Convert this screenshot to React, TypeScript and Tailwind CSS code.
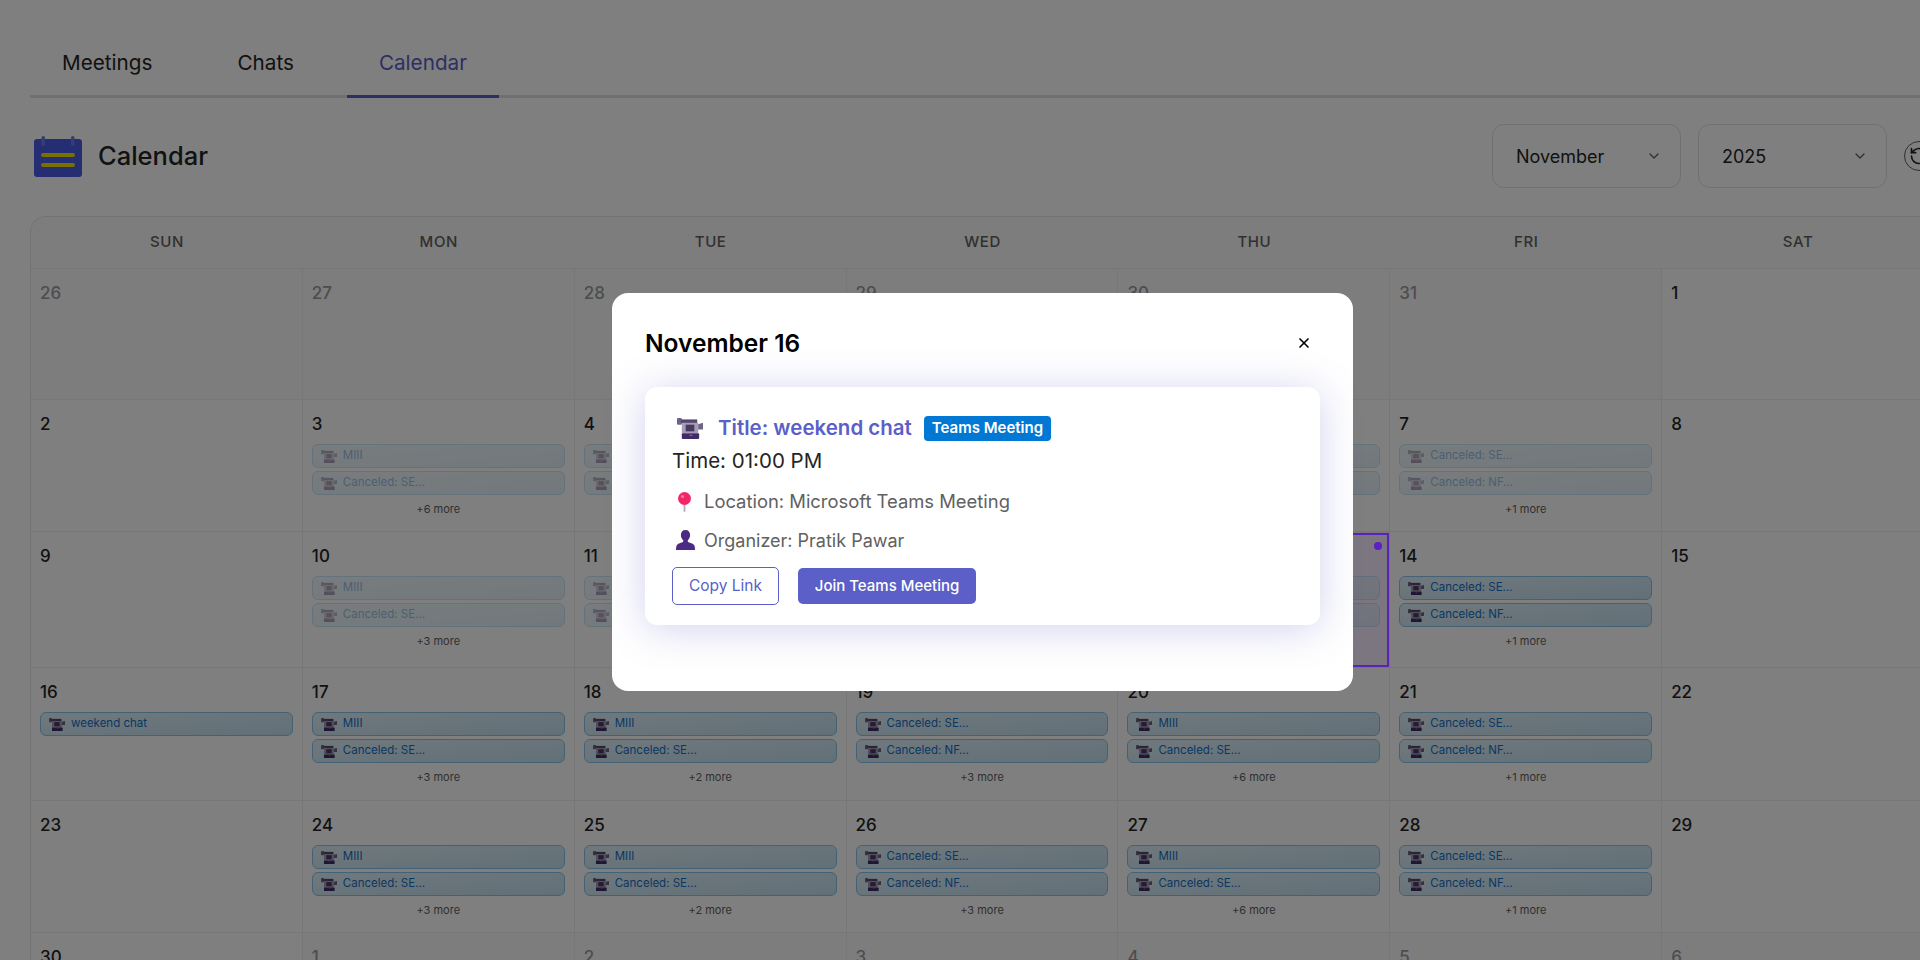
import { ChevronDown, RotateCcw, X } from "lucide-react";

type Day = {
  date: number;
  muted?: boolean;
  faded?: boolean;
  selected?: boolean;
  events?: string[];
  more?: number;
};

const MIII = ["MIII", "Canceled: SE…"];
const CANCELED = ["Canceled: SE…", "Canceled: NF…"];

const weeks: { height: string; days: Day[] }[] = [
  {
    height: "h-[131px]",
    days: [
      { date: 26, muted: true },
      { date: 27, muted: true },
      { date: 28, muted: true },
      { date: 29, muted: true },
      { date: 30, muted: true },
      { date: 31, muted: true },
      { date: 1 },
    ],
  },
  {
    height: "h-[132px]",
    days: [
      { date: 2 },
      { date: 3, faded: true, events: MIII, more: 6 },
      { date: 4, faded: true, events: MIII, more: 2 },
      { date: 5, faded: true, events: CANCELED, more: 3 },
      { date: 6, faded: true, events: MIII, more: 6 },
      { date: 7, faded: true, events: CANCELED, more: 1 },
      { date: 8 },
    ],
  },
  {
    height: "h-[136px]",
    days: [
      { date: 9 },
      { date: 10, faded: true, events: MIII, more: 3 },
      { date: 11, faded: true, events: MIII, more: 2 },
      { date: 12, faded: true, events: CANCELED, more: 3 },
      { date: 13, faded: true, selected: true, events: MIII, more: 6 },
      { date: 14, events: CANCELED, more: 1 },
      { date: 15 },
    ],
  },
  {
    height: "h-[133px]",
    days: [
      { date: 16, events: ["weekend chat"] },
      { date: 17, events: MIII, more: 3 },
      { date: 18, events: MIII, more: 2 },
      { date: 19, events: CANCELED, more: 3 },
      { date: 20, events: MIII, more: 6 },
      { date: 21, events: CANCELED, more: 1 },
      { date: 22 },
    ],
  },
  {
    height: "h-[132px]",
    days: [
      { date: 23 },
      { date: 24, events: MIII, more: 3 },
      { date: 25, events: MIII, more: 2 },
      { date: 26, events: CANCELED, more: 3 },
      { date: 27, events: MIII, more: 6 },
      { date: 28, events: CANCELED, more: 1 },
      { date: 29 },
    ],
  },
  {
    height: "h-[132px]",
    days: [
      { date: 30 },
      { date: 1, muted: true },
      { date: 2, muted: true },
      { date: 3, muted: true },
      { date: 4, muted: true },
      { date: 5, muted: true },
      { date: 6, muted: true },
    ],
  },
];

function CameraIcon({ className }: { className: string }) {
  return (
    <svg viewBox="0 0 27 22" preserveAspectRatio="none" className={className}>
      <rect x="0" y="0" width="5" height="7" rx="1" fill="#6f6386" />
      <rect x="4" y="1.500" width="17" height="4" fill="#54476c" />
      <rect x="5" y="5" width="17" height="11" fill="#a79cb8" />
      <rect x="9" y="7" width="9" height="7" fill="#463a5f" />
      <path d="M22 6.500l5-1.500v7h-5z" fill="#6f6386" />
      <rect x="5" y="16" width="18" height="6" rx="1" fill="#3d2c66" />
      <rect x="13" y="17.500" width="3" height="1.500" fill="#c2456e" />
    </svg>
  );
}

function PinIcon() {
  return (
    <svg viewBox="0 0 15 20" className="h-5 w-[15px]">
      <rect x="6.600" y="11" width="1.800" height="9" rx="0.900" fill="#b3adbd" />
      <circle cx="7.500" cy="6.500" r="6.500" fill="#f0286a" />
      <circle cx="5.500" cy="4.500" r="1.600" fill="#ff7aa5" />
    </svg>
  );
}

function PersonIcon() {
  return (
    <svg viewBox="0 0 19 20" className="h-5 w-[19px]">
      <path
        d="M9.500 0c3 0 4.600 2.100 4.600 5 0 2.300-1 4.200-2.300 5.300v1.300c0 1 4.200 1.400 6 3.200 1 1 1.200 3.200 1.200 5.200H0c0-2 .2-4.200 1.200-5.200 1.800-1.800 6-2.200 6-3.200v-1.300C5.900 9.200 4.900 7.300 4.900 5c0-2.900 1.600-5 4.600-5z"
        fill="#4b2a86"
      />
    </svg>
  );
}

function CalendarIcon() {
  return (
    <svg viewBox="0 0 48 41" className="h-[41px] w-12">
      <rect x="0" y="3" width="48" height="38" rx="3" fill="#4a5ce6" />
      <rect x="7.500" y="0" width="3.500" height="10" rx="1.700" fill="#6b7af2" />
      <rect x="37" y="0" width="3.500" height="10" rx="1.700" fill="#6b7af2" />
      <rect x="7" y="17" width="34" height="4" rx="2" fill="#f5e100" />
      <rect x="7" y="27" width="34" height="4" rx="2" fill="#f5e100" />
    </svg>
  );
}

function EventChip({ label, faded }: { label: string; faded?: boolean }) {
  return (
    <div
      className={`flex h-6 items-center gap-[6px] rounded-md border border-[#88c4ec] bg-linear-to-br from-[#e0f2fa] to-[#c4e0f0] pl-2 ${
        faded ? "opacity-45" : ""
      }`}
    >
      <CameraIcon className="h-[13px] w-[16px] shrink-0" />
      <span className="text-[11.500px] leading-none text-[#1470c8]">{label}</span>
    </div>
  );
}

function DayCell({ day }: { day: Day }) {
  return (
    <div
      className={`relative border-r border-b border-[#eeeeee] px-[9px] ${
        day.selected ? "bg-[#f6ecff]" : day.muted ? "bg-[#fbfbfb]" : "bg-white"
      }`}
    >
      {day.selected && (
        // sits above the backdrop, the frame keeps its full colour in the reference
        <div className="absolute top-px right-0 bottom-0 left-0 z-30 border-2 border-[#5a22b8]">
          <span className="absolute top-[7px] right-[5px] h-2 w-2 rounded-full bg-[#5b1fc4]" />
        </div>
      )}
      <div
        className={`pt-[12px] text-[17px] leading-6 font-medium ${
          day.muted ? "text-[#9a9a9a]" : "text-[#242424]"
        }`}
      >
        {day.date}
      </div>
      {day.events && (
        <div className="mt-[8px] flex flex-col gap-[3px]">
          {day.events.map((label) => (
            <EventChip key={label} label={label} faded={day.faded} />
          ))}
        </div>
      )}
      {day.more && (
        <div className="mt-[6px] text-center text-[11px] leading-4 text-[#616161]">
          +{day.more} more
        </div>
      )}
    </div>
  );
}

function YearSelect({ value }: { value: string }) {
  return (
    <div className="flex h-16 w-[189px] items-center justify-between rounded-xl border border-[#e0e0e0] pr-[18px] pl-[23px]">
      <span className="text-[18px] text-[#242424]">{value}</span>
      <ChevronDown size={16} className="text-[#616161]" />
    </div>
  );
}

export default function App() {
  const tabs = ["Meetings", "Chats", "Calendar"];
  const dayNames = ["SUN", "MON", "TUE", "WED", "THU", "FRI", "SAT"];

  return (
    <div className="relative h-[960px] w-[1920px] overflow-hidden bg-white font-['Inter','Noto_Sans',sans-serif]">
      <div className="ml-[30px] w-[1904px]">
        <nav className="mt-[30px] flex gap-[21px] border-b-[3px] border-[#e0e0e0]">
          {tabs.map((tab) => (
            <div
              key={tab}
              className={`flex h-[65px] items-center px-[32px] text-[20.700px] ${
                tab === "Calendar"
                  ? "-mb-[3px] h-[68px] border-b-[3px] border-[#5b5fc7] text-[#5b5fc7]"
                  : "text-[#242424]"
              }`}
            >
              {tab}
            </div>
          ))}
        </nav>

        <div className="mt-[26px] flex h-16 items-center justify-between">
          <div className="ml-1 flex items-center gap-4">
            <CalendarIcon />
            <h1 className="text-[25.500px] font-medium text-[#242424]">Calendar</h1>
          </div>
          <div className="flex items-center gap-[17px]">
            <YearSelect value="November" />
            <YearSelect value="2025" />
            <div className="flex h-[30px] w-[30px] items-center justify-center rounded-full border-[1.500px] border-[#616161]">
              <RotateCcw size={20} className="text-[#242424]" />
            </div>
          </div>
        </div>

        <div className="mt-7 overflow-hidden rounded-tl-2xl border-t border-l border-[#e6e6e6]">
          <div className="grid h-[52px] grid-cols-7 border-b border-[#eeeeee] bg-[#fafafa] pb-px">
            {dayNames.map((name) => (
              <div
                key={name}
                className="flex items-center justify-center text-[15px] font-medium tracking-[0.6px] text-[#616161]"
              >
                {name}
              </div>
            ))}
          </div>
          {weeks.map((week) => (
            <div key={week.days[0].date} className={`grid grid-cols-7 ${week.height}`}>
              {week.days.map((day) => (
                <DayCell key={day.date} day={day} />
              ))}
            </div>
          ))}
        </div>
      </div>

      <div className="fixed inset-0 z-20 bg-black/50" />

      <div className="absolute top-[293px] left-[612px] z-40 h-[398px] w-[741px] rounded-2xl bg-white px-[33px] pt-[34px]">
        <div className="mb-[28px] flex h-8 items-center justify-between">
          <h2 className="text-[24.500px] font-semibold text-black">November 16</h2>
          <button className="flex h-8 w-8 items-center justify-center text-black">
            <X size={16} strokeWidth={2.500} />
          </button>
        </div>

        <div className="rounded-xl bg-white px-[27px] pt-[29px] pb-[20px] shadow-[0_4px_40px_rgba(91,95,199,0.28)]">
          <div className="flex h-[25px] items-center">
            <CameraIcon className="ml-[5px] h-[21px] w-[26px]" />
            <span className="ml-[15px] text-[20.500px] font-semibold text-[#5b5fc7]">
              Title: weekend chat
            </span>
            <span className="ml-3 flex h-[25px] items-center rounded bg-[#0078d4] px-2 text-[15px] font-semibold text-white">
              Teams Meeting
            </span>
          </div>
          <div className="mt-[6px] h-7 text-[20.500px] leading-7 text-[#242424]">Time: 01:00 PM</div>
          <div className="mt-[13px] flex h-7 items-center gap-[12px] pl-[5px] text-[18.400px] text-[#616161]">
            <PinIcon />
            <span>Location: Microsoft Teams Meeting</span>
          </div>
          <div className="mt-[10px] flex h-7 items-center gap-[9px] pl-1 text-[18px] text-[#616161]">
            <PersonIcon />
            <span>Organizer: Pratik Pawar</span>
          </div>
          <div className="mt-[13px] flex items-center gap-[19px]">
            <button className="h-[38px] w-[107px] rounded-[5px] border-[1.500px] border-[#5b5fc7] text-[15.500px] text-[#5b5fc7]">
              Copy Link
            </button>
            <button className="h-9 w-[178px] rounded-[5px] bg-[#5b5fc7] text-[15px] font-medium text-white">
              Join Teams Meeting
            </button>
          </div>
        </div>
      </div>
    </div>
  );
}
